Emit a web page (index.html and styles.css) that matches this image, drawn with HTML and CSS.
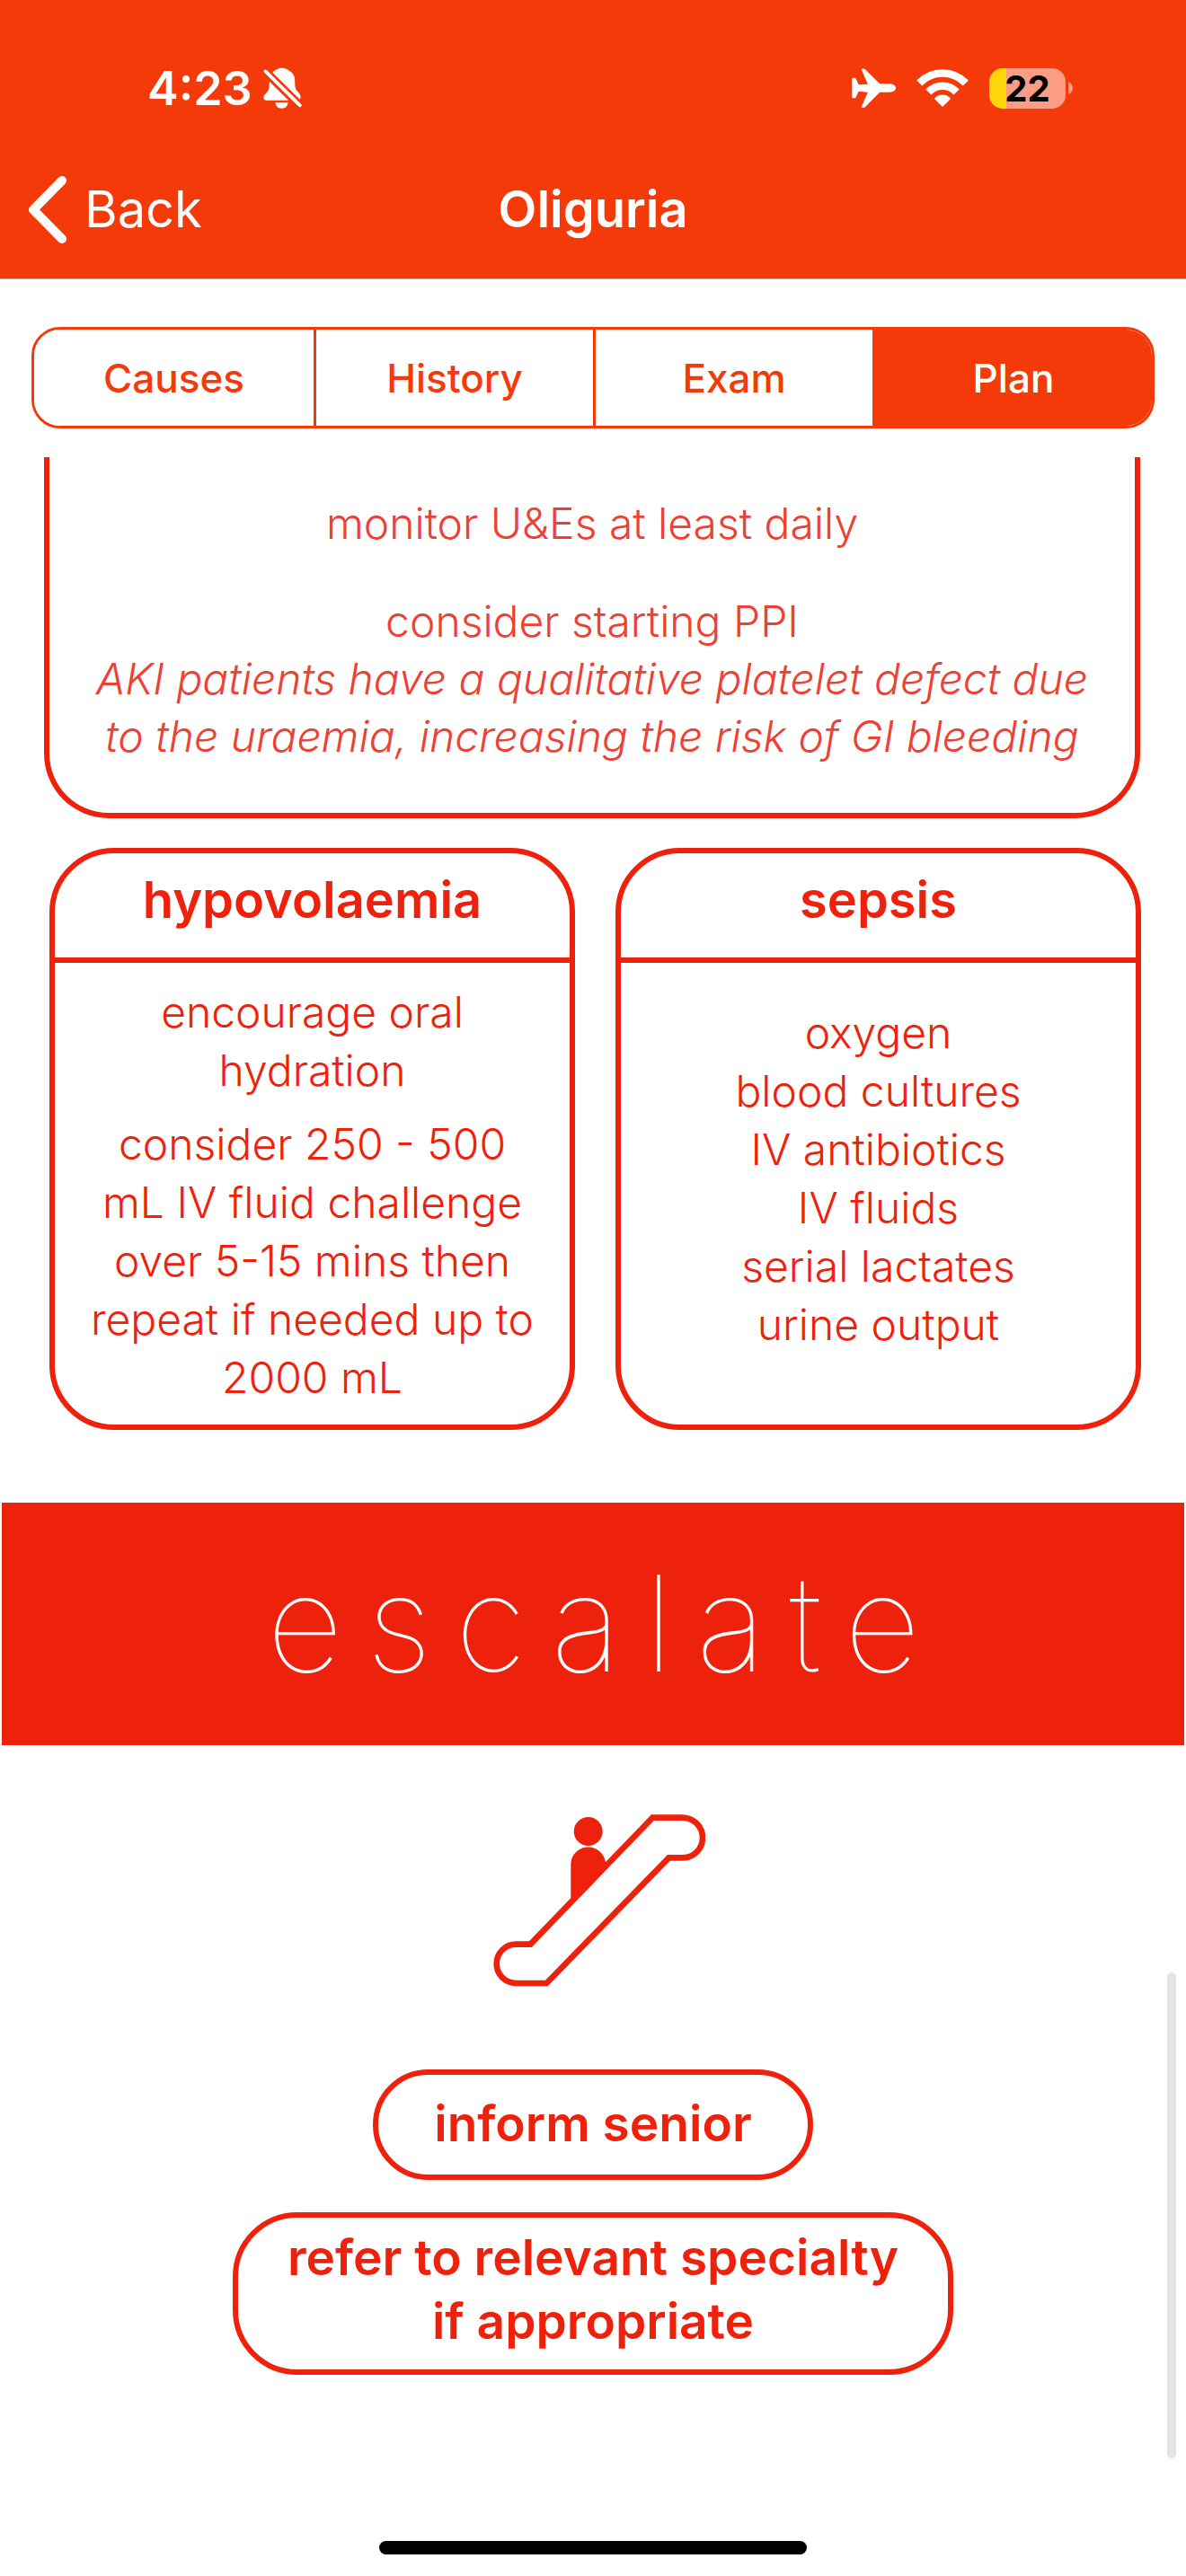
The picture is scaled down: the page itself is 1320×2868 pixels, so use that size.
FILE: index.html
```html
<!DOCTYPE html>
<html lang="en">
<head>
<meta charset="utf-8">
<meta name="viewport" content="width=device-width, initial-scale=1">
<title>Oliguria</title>
<link rel="stylesheet" href="styles.css">
</head>
<body>
<header class="top">
  <div class="status">
    <div class="status-side">
      <span class="time">4:23</span>
      <svg class="bell" viewBox="26 32 128 138" aria-label="Silent mode" role="img">
        <path fill="#fff" d="M61 44C67 42 71 34 88 34C105 34 109 42 115 45C126 52 131 62 131 76C131 96 133 106 140 112C147 119 150 124 150 130C150 135 149 138 146 138L57 50Z M46 79L110 142H36C29 142 26 138 27 132C28 121 44 116 45 98Z M66 150H108C107 162 99 169 87 169C75 169 67 162 66 150Z"/>
        <path stroke="#f53a0a" stroke-width="24" d="M36 47L146 157"/>
        <path stroke="#fff" stroke-width="11" stroke-linecap="round" d="M33 45L148 159"/>
      </svg>
    </div>
    <div class="status-side">
      <svg class="plane" viewBox="20 36 148 132" aria-label="Airplane mode" role="img">
        <path fill="#fff" d="M21 70Q21 68 25 68H30Q33 68 34 71L43 91L74 89L53 41Q51 37 56 37H61Q64 37 66 40L114 88H146C160 88 168 95 168 102C168 109 160 116 146 116H114L66 165Q64 168 61 168H56Q51 168 53 164L74 116L43 113L34 133Q33 136 30 136H25Q21 136 21 134Z"/>
      </svg>
      <svg class="wifi" viewBox="239 33 174 127" aria-label="Wi-Fi" role="img">
        <path fill="none" stroke="#fff" stroke-width="26" d="M248 80A108 108 0 0 1 404 80M279 110A65 65 0 0 1 373 110"/>
        <path fill="#fff" d="M300 134Q298 132 301 129A36 36 0 0 1 351 129Q354 132 352 134L326 160Z"/>
      </svg>
      <div class="battery-wrap">
        <span class="battery">22</span>
        <svg class="nub" viewBox="0 0 5 14" aria-hidden="true"><path fill="#fff" fill-opacity=".5" d="M0 0C3 1 5 4 5 7S3 13 0 14Z"/></svg>
      </div>
    </div>
  </div>
  <nav class="nav">
    <a class="back" href="#">
      <svg class="chevron" viewBox="0 0 43 75" aria-hidden="true"><path fill="none" stroke="#fff" stroke-width="10" stroke-linecap="round" stroke-linejoin="round" d="M38 5L6 37.500L38 70"/></svg>
      Back
    </a>
    <h1 class="title">Oliguria</h1>
  </nav>
</header>

<div class="tabs">
  <button class="tab" type="button">Causes</button>
  <button class="tab" type="button">History</button>
  <button class="tab" type="button">Exam</button>
  <button class="tab active" type="button">Plan</button>
</div>

<main class="content">
  <section class="card monitor">
    <p>monitor U&amp;Es at least daily</p>
    <p>consider starting PPI<br><em>AKI patients have a qualitative platelet defect due<br>to the uraemia, increasing the risk of GI bleeding</em></p>
  </section>

  <div class="pair">
    <section class="card">
      <h2 class="card-title">hypovolaemia</h2>
      <div class="card-body">
        <p>encourage oral<br>hydration</p>
        <p>consider 250 - 500<br>mL IV fluid challenge<br>over 5-15 mins then<br>repeat if needed up to<br>2000 mL</p>
      </div>
    </section>
    <section class="card">
      <h2 class="card-title">sepsis</h2>
      <ul class="card-body list">
        <li>oxygen</li>
        <li>blood cultures</li>
        <li>IV antibiotics</li>
        <li>IV fluids</li>
        <li>serial lactates</li>
        <li>urine output</li>
      </ul>
    </section>
  </div>

  <h2 class="banner">escalate</h2>

  <section class="escalate">
    <svg class="escalator" viewBox="84 89 708 576" role="img" aria-label="Person on an escalator">
      <circle cx="401" cy="146" r="48" fill="#ee220c"/>
      <path fill="#ee220c" d="M343 385V254A58 58 0 0 1 458 246L470 262Z"/>
      <path fill="#fff" stroke="#ee220c" stroke-width="20" d="M616 100H716A67 67 0 0 1 716 234H670L262 653H160A65 65 0 0 1 160 523H208Z"/>
    </svg>
    <p class="pill">inform senior</p>
    <p class="pill wide">refer to relevant specialty<br>if appropriate</p>
  </section>
  <div class="scrollbar"></div>
</main>

<footer class="home"><div class="home-bar"></div></footer>
</body>
</html>
```
FILE: styles.css
```css
:root {
  --bar: #f53a0a;
  --red: #ee220c;
  --soft-red: #ec4134;
}

* {
  box-sizing: border-box;
}

body {
  margin: 0;
  min-height: 100vh;
  display: flex;
  flex-direction: column;
  background: #fff;
  color: var(--red);
  font-family: Inter, "Liberation Sans", sans-serif;
}

h1, h2, p, ul {
  margin: 0;
  padding: 0;
  font-weight: inherit;
}

svg {
  display: block;
}

/* Header */
.top {
  background: var(--bar);
  color: #fff;
  border-bottom: 1px solid #b4b4b4;
  padding: 68px 0 39px;
}

.status {
  display: flex;
  justify-content: space-between;
  align-items: center;
  height: 60px;
  padding: 0 126px 0 164px;
}

.status-side {
  display: flex;
  align-items: center;
  gap: 12px;
}

.status-side + .status-side {
  gap: 23px;
}

.time {
  font-size: 52px;
  font-weight: 600;
}

.bell {
  width: 43px;
  height: 46px;
}

.plane {
  width: 49px;
  height: 44px;
}

.wifi {
  width: 58px;
  height: 42px;
}

.battery-wrap {
  display: flex;
  align-items: center;
  gap: 3px;
}

.battery {
  width: 85px;
  height: 45px;
  border-radius: 15px;
  background: linear-gradient(to right, #ffd60a 22%, #fb9c84 22%);
  color: #000;
  font-size: 40px;
  font-weight: 700;
  line-height: 45px;
  text-align: center;
}

.nub {
  width: 5px;
  height: 14px;
}

.nav {
  display: grid;
  grid-template-columns: 1fr auto 1fr;
  align-items: center;
  margin-top: 68px;
  padding: 0 31px;
}

.back {
  display: flex;
  align-items: center;
  gap: 20px;
  color: inherit;
  font-size: 56px;
  line-height: 75px;
  text-decoration: none;
}

.chevron {
  width: 43px;
  height: 75px;
}

.title {
  font-size: 56px;
  font-weight: 600;
  line-height: 75px;
}

/* Segmented control */
.tabs {
  display: grid;
  grid-template-columns: repeat(4, 1fr);
  margin: 53px 35px 32px;
  border: 3px solid var(--bar);
  border-radius: 32px;
  overflow: hidden;
}

.tab {
  height: 107px;
  padding: 0;
  border: 0;
  border-left: 3px solid var(--bar);
  background: #fff;
  color: var(--bar);
  font-family: inherit;
  font-size: 44px;
  font-weight: 500;
}

.tab:first-child {
  border-left: 0;
}

.tab.active {
  background: var(--bar);
  color: #fff;
}

/* Scrolling content */
.content {
  position: relative;
  font-size: 48px;
  font-weight: 300;
  text-align: center;
}

.card {
  border: 6px solid var(--red);
  border-radius: 72px;
}

.monitor {
  margin: 0 51px 0 49px;
  border-top: 0;
  border-top-left-radius: 0;
  border-top-right-radius: 0;
  padding: 42px 0 53px;
  color: var(--soft-red);
  line-height: 64px;
}

.monitor p + p {
  margin-top: 45px;
}

.pair {
  display: grid;
  grid-template-columns: 1fr 1fr;
  gap: 45px;
  margin: 33px 50px 0 55px;
}

.card-title {
  border-bottom: 6px solid var(--red);
  padding: 20px 0 32px;
  font-size: 56px;
  font-weight: 600;
  line-height: 64px;
}

.card-body {
  padding: 22px 0 20px;
  line-height: 65px;
}

.card-body p + p {
  margin-top: 17px;
}

.list {
  padding-top: 45px;
  list-style: none;
}

.banner {
  margin: 81px 2px 0;
  padding: 45px 0 45px 27px;
  background: var(--red);
  color: #fff;
  font-size: 148px;
  font-weight: 100;
  letter-spacing: 26px;
  line-height: 180px;
}

.escalate {
  display: flex;
  flex-direction: column;
  align-items: center;
  padding: 77px 0 93px;
}

.escalator {
  width: 236px;
  height: 192px;
  margin-left: 13px;
}

.pill {
  margin-top: 92px;
  border: 6px solid var(--red);
  border-radius: 72px;
  padding: 19px 62px 21px;
  font-size: 55px;
  font-weight: 600;
  line-height: 71px;
}

.pill.wide {
  margin-top: 36px;
  padding: 9px 55px 18px;
}

.scrollbar {
  position: absolute;
  right: 11px;
  bottom: 0;
  width: 10px;
  height: 541px;
  border-radius: 5px;
  background: #e4e4e4;
}

.home {
  margin-top: auto;
  padding-bottom: 24px;
}

.home-bar {
  width: 36%;
  height: 15px;
  margin: 0 auto;
  border-radius: 8px;
  background: #000;
}
```
